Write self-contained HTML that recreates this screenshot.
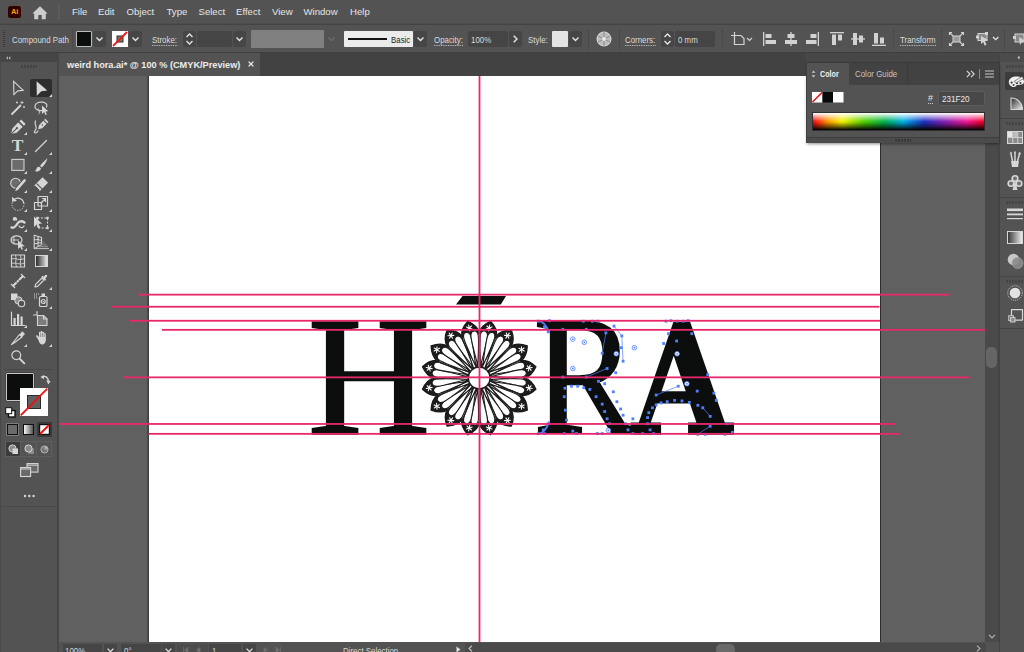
<!DOCTYPE html>
<html lang="en"><head><meta charset="utf-8"><title>weird hora.ai</title><style>
*{box-sizing:border-box;margin:0;padding:0}
html,body{width:1024px;height:652px;overflow:hidden;background:#535353}
body{position:relative;font-family:"Liberation Sans",sans-serif;font-size:9px;color:#dcdcdc;-webkit-font-smoothing:antialiased}
.abs{position:absolute}
.t{position:absolute;white-space:pre;line-height:12px;height:12px;transform-origin:0 50%;transform:scaleX(.875)}
.m{position:absolute;white-space:pre;font-size:9.6px;line-height:14px;top:5.3px;color:#e6e6e6}
.ul{border-bottom:1px dotted #cfcfcf}
.dd{position:absolute;background:#464646;border-radius:2px}
.fld{position:absolute;background:#454545;border-radius:2px}
.sep{position:absolute;width:1px;background:#444}
svg{position:absolute;overflow:visible}
</style></head><body>
<div class="abs" style="left:0;top:0;width:1024px;height:24px;background:#535353"></div>
<div class="abs" style="left:0;top:23px;width:1024px;height:1px;background:#4e4e4e"></div><div class="abs" style="left:0;top:24px;width:1024px;height:1px;background:#444"></div>
<div class="abs" style="left:8px;top:6px;width:13px;height:12px;background:#330000;border-radius:2.5px;"></div>
<div class="abs" style="left:8px;top:6px;width:13px;height:12px;line-height:12px;font-size:7.5px;font-weight:bold;color:#ff9a00;text-align:center;letter-spacing:-.2px">Ai</div>
<svg style="left:32px;top:6px" width="16" height="14" viewBox="0 0 16 14"><path d="M8 0.3 L0.4 7.5 H2.2 V13.2 H6.3 V9 H9.7 V13.2 H13.8 V7.5 H15.6 Z" fill="#cdcdcd"/></svg>
<div class="sep" style="left:58px;top:4px;height:16px;width:2px;background:#5b5b5b"></div>
<div class="m" style="left:72px">File</div>
<div class="m" style="left:98px">Edit</div>
<div class="m" style="left:126.5px">Object</div>
<div class="m" style="left:166.5px">Type</div>
<div class="m" style="left:198.5px">Select</div>
<div class="m" style="left:236px">Effect</div>
<div class="m" style="left:272px">View</div>
<div class="m" style="left:303.5px">Window</div>
<div class="m" style="left:350px">Help</div>
<div class="abs" style="left:0;top:25px;width:1024px;height:27px;background:#535353"></div>
<div class="abs" style="left:0;top:52px;width:1024px;height:1px;background:#3f3f3f"></div>
<div class="abs" style="left:3px;top:30px;width:2px;height:17px;border-left:1px dotted #3c3c3c;border-right:1px dotted #3c3c3c"></div>
<div class="t" style="left:12px;top:33.7px;">Compound Path</div>
<div class="sep" style="left:72px;top:28px;height:22px;background:#4a4a4a"></div>
<div class="abs" style="left:76px;top:31px;width:16px;height:16px;background:#0c0e0e;border:1px solid #bdbdbd;border-radius:1px"></div>
<div class="dd" style="left:93px;top:31px;width:13px;height:16px"></div>
<svg style="left:96px;top:37px" width="7" height="4" viewBox="0 0 7 4"><path d="M0.5 0.5 L3.5 3.5 L6.5 0.5" fill="none" stroke="#e6e6e6" stroke-width="1.4"/></svg>
<svg style="left:112px;top:31px" width="16" height="16" viewBox="0 0 16 16"><rect width="16" height="16" fill="#fff"/><rect x="5" y="5" width="6" height="6" fill="#777" stroke="#333" stroke-width="1"/><path d="M1 15 L15 1" stroke="#f01818" stroke-width="1.8"/></svg>
<div class="dd" style="left:129px;top:31px;width:13px;height:16px"></div>
<svg style="left:132px;top:37px" width="7" height="4" viewBox="0 0 7 4"><path d="M0.5 0.5 L3.5 3.5 L6.5 0.5" fill="none" stroke="#e6e6e6" stroke-width="1.4"/></svg>
<div class="t ul" style="left:152px;top:33.7px;">Stroke:</div>
<div class="dd" style="left:183px;top:31px;width:13px;height:16px"></div>
<svg style="left:186px;top:33px" width="7" height="12" viewBox="0 0 7 12"><path d="M0.5 4 L3.5 1 L6.5 4 M0.5 8 L3.5 11 L6.5 8" fill="none" stroke="#e6e6e6" stroke-width="1.3"/></svg>
<div class="fld" style="left:197px;top:31px;width:35px;height:16px"></div>
<div class="dd" style="left:233px;top:31px;width:13px;height:16px"></div>
<svg style="left:236px;top:37px" width="7" height="4" viewBox="0 0 7 4"><path d="M0.5 0.5 L3.5 3.5 L6.5 0.5" fill="none" stroke="#e6e6e6" stroke-width="1.4"/></svg>
<div class="abs" style="left:251px;top:30px;width:73px;height:18px;background:#808080;border-radius:1px"></div>
<svg style="left:328px;top:37px" width="7" height="4" viewBox="0 0 7 4"><path d="M0.5 0.5 L3.5 3.5 L6.5 0.5" fill="none" stroke="#6a6a6a" stroke-width="1.4"/></svg>
<div class="abs" style="left:344px;top:31px;width:69px;height:16px;background:#ebebeb;border-radius:1px"></div>
<div class="abs" style="left:348px;top:38px;width:39px;height:2px;background:#111"></div>
<div class="t" style="left:391px;top:33.7px;color:#222">Basic</div>
<div class="dd" style="left:414px;top:31px;width:13px;height:16px"></div>
<svg style="left:417px;top:37px" width="7" height="4" viewBox="0 0 7 4"><path d="M0.5 0.5 L3.5 3.5 L6.5 0.5" fill="none" stroke="#e6e6e6" stroke-width="1.4"/></svg>
<div class="t ul" style="left:434px;top:33.7px;">Opacity:</div>
<div class="fld" style="left:468px;top:31px;width:40px;height:16px"></div>
<div class="t" style="left:471px;top:33.7px;">100%</div>
<div class="dd" style="left:509px;top:31px;width:13px;height:16px"></div>
<svg style="left:513px;top:35px" width="5" height="8" viewBox="0 0 5 8"><path d="M0.7 0.7 L4 4 L0.7 7.3" fill="none" stroke="#e6e6e6" stroke-width="1.4"/></svg>
<div class="t" style="left:528px;top:33.7px;">Style:</div>
<div class="abs" style="left:552px;top:31px;width:16px;height:16px;background:#e4e4e4;border-radius:1px"></div>
<div class="dd" style="left:569px;top:31px;width:13px;height:16px"></div>
<svg style="left:572px;top:37px" width="7" height="4" viewBox="0 0 7 4"><path d="M0.5 0.5 L3.5 3.5 L6.5 0.5" fill="none" stroke="#e6e6e6" stroke-width="1.4"/></svg>
<div class="sep" style="left:588px;top:28px;height:22px;background:#4a4a4a"></div>
<svg style="left:596px;top:31px" width="16" height="16" viewBox="0 0 16 16"><circle cx="8" cy="8" r="7" fill="#bdbdbd" stroke="#e0e0e0" stroke-width="1"/><path d="M8 8 L8 1 M8 8 L14 5 M8 8 L14 11 M8 8 L8 15 M8 8 L2 11 M8 8 L2 5" stroke="#8a8a8a" stroke-width="1"/><circle cx="8" cy="8" r="2" fill="#e8e8e8"/></svg>
<div class="sep" style="left:619px;top:28px;height:22px;background:#4a4a4a"></div>
<div class="t ul" style="left:625px;top:33.7px;">Corners:</div>
<div class="dd" style="left:661px;top:31px;width:13px;height:16px"></div>
<svg style="left:664px;top:33px" width="7" height="12" viewBox="0 0 7 12"><path d="M0.5 4 L3.5 1 L6.5 4 M0.5 8 L3.5 11 L6.5 8" fill="none" stroke="#e6e6e6" stroke-width="1.3"/></svg>
<div class="fld" style="left:675px;top:31px;width:40px;height:16px"></div>
<div class="t" style="left:678px;top:33.7px;">0 mm</div>
<div class="sep" style="left:722px;top:28px;height:22px;background:#4a4a4a"></div>
<svg style="left:731px;top:32px" width="22" height="15" viewBox="0 0 22 15"><path d="M3.5 0 V12.5 H13 V6.5 L10 3.5 H0" fill="none" stroke="#d2d2d2" stroke-width="1.2"/><path d="M16 6 L18.5 8.5 L21 6" fill="none" stroke="#d2d2d2" stroke-width="1.2"/></svg>
<svg style="left:763px;top:32px" width="14" height="14" viewBox="0 0 14 14"><rect x="0" y="0" width="1.3" height="14" fill="#d2d2d2"/><rect x="2.5" y="2" width="6" height="4" fill="#d2d2d2"/><rect x="2.5" y="8" width="10.5" height="4" fill="#d2d2d2"/></svg>
<svg style="left:784px;top:32px" width="14" height="14" viewBox="0 0 14 14"><rect x="6.3" y="0" width="1.3" height="14" fill="#d2d2d2"/><rect x="3.5" y="2" width="7" height="4" fill="#d2d2d2"/><rect x="1" y="8" width="12" height="4" fill="#d2d2d2"/></svg>
<svg style="left:805px;top:32px" width="14" height="14" viewBox="0 0 14 14"><rect x="12.7" y="0" width="1.3" height="14" fill="#d2d2d2"/><rect x="5.5" y="2" width="6" height="4" fill="#d2d2d2"/><rect x="1" y="8" width="10.5" height="4" fill="#d2d2d2"/></svg>
<svg style="left:830px;top:32px" width="14" height="14" viewBox="0 0 14 14"><rect x="0" y="0" width="14" height="1.3" fill="#d2d2d2"/><rect x="2" y="2.5" width="4" height="10.5" fill="#d2d2d2"/><rect x="8" y="2.5" width="4" height="6" fill="#d2d2d2"/></svg>
<svg style="left:851px;top:32px" width="14" height="14" viewBox="0 0 14 14"><rect x="0" y="6.3" width="14" height="1.3" fill="#d2d2d2"/><rect x="2" y="1" width="4" height="12" fill="#d2d2d2"/><rect x="8" y="3.5" width="4" height="7" fill="#d2d2d2"/></svg>
<svg style="left:872px;top:32px" width="14" height="14" viewBox="0 0 14 14"><rect x="0" y="12.7" width="14" height="1.3" fill="#d2d2d2"/><rect x="2" y="1" width="4" height="10.5" fill="#d2d2d2"/><rect x="8" y="5.5" width="4" height="6" fill="#d2d2d2"/></svg>
<div class="sep" style="left:893px;top:28px;height:22px;background:#4a4a4a"></div>
<div class="t ul" style="left:900px;top:33.7px;">Transform</div>
<div class="sep" style="left:941px;top:28px;height:22px;background:#4a4a4a"></div>
<svg style="left:949px;top:32px" width="15" height="14" viewBox="0 0 15 14"><rect x="4" y="4" width="7" height="6" fill="#9a9a9a" stroke="#d2d2d2" stroke-width="1"/><path d="M0.5 3 V0.5 H3 M12 0.5 H14.5 V3 M14.5 11 V13.5 H12 M3 13.5 H0.5 V11 M1 1 L4 4 M14 1 L11 4 M14 13 L11 10 M1 13 L4 10" fill="none" stroke="#d2d2d2" stroke-width="1.1"/></svg>
<svg style="left:975px;top:32px" width="26" height="14" viewBox="0 0 26 14"><rect x="3" y="1.5" width="9" height="7" fill="#8a8a8a" stroke="#d2d2d2" stroke-width="1"/><rect x="1" y="3.5" width="3" height="3" fill="#d2d2d2"/><rect x="10" y="0" width="3" height="3" fill="#d2d2d2"/><path d="M6 4 L13 8 L10 9 L11.5 13 L9.5 13.5 L8.3 10 L6 12 Z" fill="#d2d2d2"/><path d="M18 5 L20.7 7.7 L23.4 5" fill="none" stroke="#e6e6e6" stroke-width="1.3"/></svg>
<div class="sep" style="left:1004px;top:28px;height:22px;background:#4a4a4a"></div>
<svg style="left:1012px;top:32px" width="12" height="14" viewBox="0 0 12 14"><rect x="3" y="2" width="9" height="8" fill="#8a8a8a" stroke="#d2d2d2" stroke-width="1"/><rect x="1" y="4" width="3" height="3" fill="#d2d2d2"/><path d="M7 5 L13 9 L10 10 L8 13 Z" fill="#d2d2d2"/></svg>
<div class="abs" style="left:59px;top:53px;width:965px;height:23px;background:#424242"></div>
<div class="abs" style="left:59px;top:53px;width:201px;height:23px;background:#535353"></div>
<div class="abs" style="left:67px;top:58.8px;white-space:pre;font-size:9.2px;font-weight:bold;line-height:12px;color:#ececec">weird hora.ai* @ 100 % (CMYK/Preview)</div>
<svg style="left:248.3px;top:60.6px" width="6" height="6" viewBox="0 0 6 6"><path d="M0.6 0.6 L5.4 5.4 M5.4 0.6 L0.6 5.4" stroke="#f0f0f0" stroke-width="1.3"/></svg>
<div class="abs" style="left:59px;top:76px;width:927px;height:566px;background:#606060"></div>
<div class="abs" style="left:149px;top:76px;width:731px;height:566px;background:#fff"></div>
<div class="abs" style="left:880px;top:76px;width:1px;height:566px;background:#2e2e2e"></div>
<div class="abs" style="left:147px;top:76px;width:2px;height:566px;background:linear-gradient(90deg,#505050,#3a3a3a)"></div>
<svg style="left:0;top:0" width="1024" height="652" viewBox="0 0 1024 652">
<defs><clipPath id="cv"><rect x="59" y="76" width="927" height="566"/></clipPath></defs>
<g clip-path="url(#cv)">
<text x="0" y="0" transform="translate(308.02,432.60) scale(0.9772,0.9778)" font-family="'Liberation Serif',serif" font-weight="bold" font-size="173" fill="#0c0e0e" stroke="#0c0e0e" stroke-width="2.4" stroke-linejoin="miter" style="font-weight:normal">H</text>
<text x="0" y="0" transform="translate(533.73,433.00) scale(0.8887,0.9743)" font-family="'Liberation Serif',serif" font-weight="bold" font-size="173" fill="#0c0e0e" stroke="#0c0e0e" stroke-width="2.8" stroke-linejoin="miter" style="font-weight:normal">R</text>
<text x="0" y="0" transform="translate(633.26,432.60) scale(0.8145,0.9717)" font-family="'DejaVu Serif',serif" font-weight="bold" font-size="155" fill="#0c0e0e" stroke="#0c0e0e" stroke-width="3.6" stroke-linejoin="miter">A</text>
<polygon points="462.5,296 506,296 500.8,304.6 456,304.6" fill="#0c0e0e"/>
<g transform="translate(479.2,378.0)" stroke-linejoin="round">
<defs><clipPath id="capclip"><rect x="-14" y="-60" width="28" height="17"/></clipPath></defs>
<g transform="rotate(11.25)">
<path d="M0 -11 C -2.2 -20 -9.2 -35 -8.9 -44.5 C -8.5 -51 -3.6 -55.2 0 -57.8 C 3.6 -55.2 8.5 -51 8.9 -44.5 C 9.2 -35 2.2 -20 0 -11 Z" fill="#fff" stroke="#1c1c1c" stroke-width="1.35"/>
<path d="M0 -11 C -2.2 -20 -9.2 -35 -8.9 -44.5 C -8.5 -51 -3.6 -55.2 0 -57.8 C 3.6 -55.2 8.5 -51 8.9 -44.5 C 9.2 -35 2.2 -20 0 -11 Z" fill="#1c1c1c" clip-path="url(#capclip)"/>
<path transform="rotate(-5.0)" d="M0 -12 C -1.3 -22 -3.9 -36 -3.7 -42.5 C -3.5 -46 -1.8 -47.4 0 -47.4 C 1.8 -47.4 3.5 -46 3.7 -42.5 C 3.9 -36 1.3 -22 0 -12 Z" fill="#fff" stroke="#1c1c1c" stroke-width="1.15"/>
<path transform="rotate(5.0)" d="M0 -12 C -1.3 -22 -3.9 -36 -3.7 -42.5 C -3.5 -46 -1.8 -47.4 0 -47.4 C 1.8 -47.4 3.5 -46 3.7 -42.5 C 3.9 -36 1.3 -22 0 -12 Z" fill="#fff" stroke="#1c1c1c" stroke-width="1.15"/>
<g transform="translate(0,-51)" stroke="#fff" stroke-width="1.05" stroke-linecap="round">
<path d="M-0.00 -3.00 L0.00 3.00"/>
<path d="M-2.60 -1.50 L2.60 1.50"/>
<path d="M-2.60 1.50 L2.60 -1.50"/>
</g>
</g>
<g transform="rotate(33.75)">
<path d="M0 -11 C -2.2 -20 -9.2 -35 -8.9 -44.5 C -8.5 -51 -3.6 -55.2 0 -57.8 C 3.6 -55.2 8.5 -51 8.9 -44.5 C 9.2 -35 2.2 -20 0 -11 Z" fill="#fff" stroke="#1c1c1c" stroke-width="1.35"/>
<path d="M0 -11 C -2.2 -20 -9.2 -35 -8.9 -44.5 C -8.5 -51 -3.6 -55.2 0 -57.8 C 3.6 -55.2 8.5 -51 8.9 -44.5 C 9.2 -35 2.2 -20 0 -11 Z" fill="#1c1c1c" clip-path="url(#capclip)"/>
<path transform="rotate(-5.0)" d="M0 -12 C -1.3 -22 -3.9 -36 -3.7 -42.5 C -3.5 -46 -1.8 -47.4 0 -47.4 C 1.8 -47.4 3.5 -46 3.7 -42.5 C 3.9 -36 1.3 -22 0 -12 Z" fill="#fff" stroke="#1c1c1c" stroke-width="1.15"/>
<path transform="rotate(5.0)" d="M0 -12 C -1.3 -22 -3.9 -36 -3.7 -42.5 C -3.5 -46 -1.8 -47.4 0 -47.4 C 1.8 -47.4 3.5 -46 3.7 -42.5 C 3.9 -36 1.3 -22 0 -12 Z" fill="#fff" stroke="#1c1c1c" stroke-width="1.15"/>
<g transform="translate(0,-51)" stroke="#fff" stroke-width="1.05" stroke-linecap="round">
<path d="M-0.00 -3.00 L0.00 3.00"/>
<path d="M-2.60 -1.50 L2.60 1.50"/>
<path d="M-2.60 1.50 L2.60 -1.50"/>
</g>
</g>
<g transform="rotate(56.25)">
<path d="M0 -11 C -2.2 -20 -9.2 -35 -8.9 -44.5 C -8.5 -51 -3.6 -55.2 0 -57.8 C 3.6 -55.2 8.5 -51 8.9 -44.5 C 9.2 -35 2.2 -20 0 -11 Z" fill="#fff" stroke="#1c1c1c" stroke-width="1.35"/>
<path d="M0 -11 C -2.2 -20 -9.2 -35 -8.9 -44.5 C -8.5 -51 -3.6 -55.2 0 -57.8 C 3.6 -55.2 8.5 -51 8.9 -44.5 C 9.2 -35 2.2 -20 0 -11 Z" fill="#1c1c1c" clip-path="url(#capclip)"/>
<path transform="rotate(-5.0)" d="M0 -12 C -1.3 -22 -3.9 -36 -3.7 -42.5 C -3.5 -46 -1.8 -47.4 0 -47.4 C 1.8 -47.4 3.5 -46 3.7 -42.5 C 3.9 -36 1.3 -22 0 -12 Z" fill="#fff" stroke="#1c1c1c" stroke-width="1.15"/>
<path transform="rotate(5.0)" d="M0 -12 C -1.3 -22 -3.9 -36 -3.7 -42.5 C -3.5 -46 -1.8 -47.4 0 -47.4 C 1.8 -47.4 3.5 -46 3.7 -42.5 C 3.9 -36 1.3 -22 0 -12 Z" fill="#fff" stroke="#1c1c1c" stroke-width="1.15"/>
<g transform="translate(0,-51)" stroke="#fff" stroke-width="1.05" stroke-linecap="round">
<path d="M-0.00 -3.00 L0.00 3.00"/>
<path d="M-2.60 -1.50 L2.60 1.50"/>
<path d="M-2.60 1.50 L2.60 -1.50"/>
</g>
</g>
<g transform="rotate(78.75)">
<path d="M0 -11 C -2.2 -20 -9.2 -35 -8.9 -44.5 C -8.5 -51 -3.6 -55.2 0 -57.8 C 3.6 -55.2 8.5 -51 8.9 -44.5 C 9.2 -35 2.2 -20 0 -11 Z" fill="#fff" stroke="#1c1c1c" stroke-width="1.35"/>
<path d="M0 -11 C -2.2 -20 -9.2 -35 -8.9 -44.5 C -8.5 -51 -3.6 -55.2 0 -57.8 C 3.6 -55.2 8.5 -51 8.9 -44.5 C 9.2 -35 2.2 -20 0 -11 Z" fill="#1c1c1c" clip-path="url(#capclip)"/>
<path transform="rotate(-5.0)" d="M0 -12 C -1.3 -22 -3.9 -36 -3.7 -42.5 C -3.5 -46 -1.8 -47.4 0 -47.4 C 1.8 -47.4 3.5 -46 3.7 -42.5 C 3.9 -36 1.3 -22 0 -12 Z" fill="#fff" stroke="#1c1c1c" stroke-width="1.15"/>
<path transform="rotate(5.0)" d="M0 -12 C -1.3 -22 -3.9 -36 -3.7 -42.5 C -3.5 -46 -1.8 -47.4 0 -47.4 C 1.8 -47.4 3.5 -46 3.7 -42.5 C 3.9 -36 1.3 -22 0 -12 Z" fill="#fff" stroke="#1c1c1c" stroke-width="1.15"/>
<g transform="translate(0,-51)" stroke="#fff" stroke-width="1.05" stroke-linecap="round">
<path d="M-0.00 -3.00 L0.00 3.00"/>
<path d="M-2.60 -1.50 L2.60 1.50"/>
<path d="M-2.60 1.50 L2.60 -1.50"/>
</g>
</g>
<g transform="rotate(101.25)">
<path d="M0 -11 C -2.2 -20 -9.2 -35 -8.9 -44.5 C -8.5 -51 -3.6 -55.2 0 -57.8 C 3.6 -55.2 8.5 -51 8.9 -44.5 C 9.2 -35 2.2 -20 0 -11 Z" fill="#fff" stroke="#1c1c1c" stroke-width="1.35"/>
<path d="M0 -11 C -2.2 -20 -9.2 -35 -8.9 -44.5 C -8.5 -51 -3.6 -55.2 0 -57.8 C 3.6 -55.2 8.5 -51 8.9 -44.5 C 9.2 -35 2.2 -20 0 -11 Z" fill="#1c1c1c" clip-path="url(#capclip)"/>
<path transform="rotate(-5.0)" d="M0 -12 C -1.3 -22 -3.9 -36 -3.7 -42.5 C -3.5 -46 -1.8 -47.4 0 -47.4 C 1.8 -47.4 3.5 -46 3.7 -42.5 C 3.9 -36 1.3 -22 0 -12 Z" fill="#fff" stroke="#1c1c1c" stroke-width="1.15"/>
<path transform="rotate(5.0)" d="M0 -12 C -1.3 -22 -3.9 -36 -3.7 -42.5 C -3.5 -46 -1.8 -47.4 0 -47.4 C 1.8 -47.4 3.5 -46 3.7 -42.5 C 3.9 -36 1.3 -22 0 -12 Z" fill="#fff" stroke="#1c1c1c" stroke-width="1.15"/>
<g transform="translate(0,-51)" stroke="#fff" stroke-width="1.05" stroke-linecap="round">
<path d="M-0.00 -3.00 L0.00 3.00"/>
<path d="M-2.60 -1.50 L2.60 1.50"/>
<path d="M-2.60 1.50 L2.60 -1.50"/>
</g>
</g>
<g transform="rotate(123.75)">
<path d="M0 -11 C -2.2 -20 -9.2 -35 -8.9 -44.5 C -8.5 -51 -3.6 -55.2 0 -57.8 C 3.6 -55.2 8.5 -51 8.9 -44.5 C 9.2 -35 2.2 -20 0 -11 Z" fill="#fff" stroke="#1c1c1c" stroke-width="1.35"/>
<path d="M0 -11 C -2.2 -20 -9.2 -35 -8.9 -44.5 C -8.5 -51 -3.6 -55.2 0 -57.8 C 3.6 -55.2 8.5 -51 8.9 -44.5 C 9.2 -35 2.2 -20 0 -11 Z" fill="#1c1c1c" clip-path="url(#capclip)"/>
<path transform="rotate(-5.0)" d="M0 -12 C -1.3 -22 -3.9 -36 -3.7 -42.5 C -3.5 -46 -1.8 -47.4 0 -47.4 C 1.8 -47.4 3.5 -46 3.7 -42.5 C 3.9 -36 1.3 -22 0 -12 Z" fill="#fff" stroke="#1c1c1c" stroke-width="1.15"/>
<path transform="rotate(5.0)" d="M0 -12 C -1.3 -22 -3.9 -36 -3.7 -42.5 C -3.5 -46 -1.8 -47.4 0 -47.4 C 1.8 -47.4 3.5 -46 3.7 -42.5 C 3.9 -36 1.3 -22 0 -12 Z" fill="#fff" stroke="#1c1c1c" stroke-width="1.15"/>
<g transform="translate(0,-51)" stroke="#fff" stroke-width="1.05" stroke-linecap="round">
<path d="M-0.00 -3.00 L0.00 3.00"/>
<path d="M-2.60 -1.50 L2.60 1.50"/>
<path d="M-2.60 1.50 L2.60 -1.50"/>
</g>
</g>
<g transform="rotate(146.25)">
<path d="M0 -11 C -2.2 -20 -9.2 -35 -8.9 -44.5 C -8.5 -51 -3.6 -55.2 0 -57.8 C 3.6 -55.2 8.5 -51 8.9 -44.5 C 9.2 -35 2.2 -20 0 -11 Z" fill="#fff" stroke="#1c1c1c" stroke-width="1.35"/>
<path d="M0 -11 C -2.2 -20 -9.2 -35 -8.9 -44.5 C -8.5 -51 -3.6 -55.2 0 -57.8 C 3.6 -55.2 8.5 -51 8.9 -44.5 C 9.2 -35 2.2 -20 0 -11 Z" fill="#1c1c1c" clip-path="url(#capclip)"/>
<path transform="rotate(-5.0)" d="M0 -12 C -1.3 -22 -3.9 -36 -3.7 -42.5 C -3.5 -46 -1.8 -47.4 0 -47.4 C 1.8 -47.4 3.5 -46 3.7 -42.5 C 3.9 -36 1.3 -22 0 -12 Z" fill="#fff" stroke="#1c1c1c" stroke-width="1.15"/>
<path transform="rotate(5.0)" d="M0 -12 C -1.3 -22 -3.9 -36 -3.7 -42.5 C -3.5 -46 -1.8 -47.4 0 -47.4 C 1.8 -47.4 3.5 -46 3.7 -42.5 C 3.9 -36 1.3 -22 0 -12 Z" fill="#fff" stroke="#1c1c1c" stroke-width="1.15"/>
<g transform="translate(0,-51)" stroke="#fff" stroke-width="1.05" stroke-linecap="round">
<path d="M-0.00 -3.00 L0.00 3.00"/>
<path d="M-2.60 -1.50 L2.60 1.50"/>
<path d="M-2.60 1.50 L2.60 -1.50"/>
</g>
</g>
<g transform="rotate(168.75)">
<path d="M0 -11 C -2.2 -20 -9.2 -35 -8.9 -44.5 C -8.5 -51 -3.6 -55.2 0 -57.8 C 3.6 -55.2 8.5 -51 8.9 -44.5 C 9.2 -35 2.2 -20 0 -11 Z" fill="#fff" stroke="#1c1c1c" stroke-width="1.35"/>
<path d="M0 -11 C -2.2 -20 -9.2 -35 -8.9 -44.5 C -8.5 -51 -3.6 -55.2 0 -57.8 C 3.6 -55.2 8.5 -51 8.9 -44.5 C 9.2 -35 2.2 -20 0 -11 Z" fill="#1c1c1c" clip-path="url(#capclip)"/>
<path transform="rotate(-5.0)" d="M0 -12 C -1.3 -22 -3.9 -36 -3.7 -42.5 C -3.5 -46 -1.8 -47.4 0 -47.4 C 1.8 -47.4 3.5 -46 3.7 -42.5 C 3.9 -36 1.3 -22 0 -12 Z" fill="#fff" stroke="#1c1c1c" stroke-width="1.15"/>
<path transform="rotate(5.0)" d="M0 -12 C -1.3 -22 -3.9 -36 -3.7 -42.5 C -3.5 -46 -1.8 -47.4 0 -47.4 C 1.8 -47.4 3.5 -46 3.7 -42.5 C 3.9 -36 1.3 -22 0 -12 Z" fill="#fff" stroke="#1c1c1c" stroke-width="1.15"/>
<g transform="translate(0,-51)" stroke="#fff" stroke-width="1.05" stroke-linecap="round">
<path d="M-0.00 -3.00 L0.00 3.00"/>
<path d="M-2.60 -1.50 L2.60 1.50"/>
<path d="M-2.60 1.50 L2.60 -1.50"/>
</g>
</g>
<g transform="rotate(191.25)">
<path d="M0 -11 C -2.2 -20 -9.2 -35 -8.9 -44.5 C -8.5 -51 -3.6 -55.2 0 -57.8 C 3.6 -55.2 8.5 -51 8.9 -44.5 C 9.2 -35 2.2 -20 0 -11 Z" fill="#fff" stroke="#1c1c1c" stroke-width="1.35"/>
<path d="M0 -11 C -2.2 -20 -9.2 -35 -8.9 -44.5 C -8.5 -51 -3.6 -55.2 0 -57.8 C 3.6 -55.2 8.5 -51 8.9 -44.5 C 9.2 -35 2.2 -20 0 -11 Z" fill="#1c1c1c" clip-path="url(#capclip)"/>
<path transform="rotate(-5.0)" d="M0 -12 C -1.3 -22 -3.9 -36 -3.7 -42.5 C -3.5 -46 -1.8 -47.4 0 -47.4 C 1.8 -47.4 3.5 -46 3.7 -42.5 C 3.9 -36 1.3 -22 0 -12 Z" fill="#fff" stroke="#1c1c1c" stroke-width="1.15"/>
<path transform="rotate(5.0)" d="M0 -12 C -1.3 -22 -3.9 -36 -3.7 -42.5 C -3.5 -46 -1.8 -47.4 0 -47.4 C 1.8 -47.4 3.5 -46 3.7 -42.5 C 3.9 -36 1.3 -22 0 -12 Z" fill="#fff" stroke="#1c1c1c" stroke-width="1.15"/>
<g transform="translate(0,-51)" stroke="#fff" stroke-width="1.05" stroke-linecap="round">
<path d="M-0.00 -3.00 L0.00 3.00"/>
<path d="M-2.60 -1.50 L2.60 1.50"/>
<path d="M-2.60 1.50 L2.60 -1.50"/>
</g>
</g>
<g transform="rotate(213.75)">
<path d="M0 -11 C -2.2 -20 -9.2 -35 -8.9 -44.5 C -8.5 -51 -3.6 -55.2 0 -57.8 C 3.6 -55.2 8.5 -51 8.9 -44.5 C 9.2 -35 2.2 -20 0 -11 Z" fill="#fff" stroke="#1c1c1c" stroke-width="1.35"/>
<path d="M0 -11 C -2.2 -20 -9.2 -35 -8.9 -44.5 C -8.5 -51 -3.6 -55.2 0 -57.8 C 3.6 -55.2 8.5 -51 8.9 -44.5 C 9.2 -35 2.2 -20 0 -11 Z" fill="#1c1c1c" clip-path="url(#capclip)"/>
<path transform="rotate(-5.0)" d="M0 -12 C -1.3 -22 -3.9 -36 -3.7 -42.5 C -3.5 -46 -1.8 -47.4 0 -47.4 C 1.8 -47.4 3.5 -46 3.7 -42.5 C 3.9 -36 1.3 -22 0 -12 Z" fill="#fff" stroke="#1c1c1c" stroke-width="1.15"/>
<path transform="rotate(5.0)" d="M0 -12 C -1.3 -22 -3.9 -36 -3.7 -42.5 C -3.5 -46 -1.8 -47.4 0 -47.4 C 1.8 -47.4 3.5 -46 3.7 -42.5 C 3.9 -36 1.3 -22 0 -12 Z" fill="#fff" stroke="#1c1c1c" stroke-width="1.15"/>
<g transform="translate(0,-51)" stroke="#fff" stroke-width="1.05" stroke-linecap="round">
<path d="M-0.00 -3.00 L0.00 3.00"/>
<path d="M-2.60 -1.50 L2.60 1.50"/>
<path d="M-2.60 1.50 L2.60 -1.50"/>
</g>
</g>
<g transform="rotate(236.25)">
<path d="M0 -11 C -2.2 -20 -9.2 -35 -8.9 -44.5 C -8.5 -51 -3.6 -55.2 0 -57.8 C 3.6 -55.2 8.5 -51 8.9 -44.5 C 9.2 -35 2.2 -20 0 -11 Z" fill="#fff" stroke="#1c1c1c" stroke-width="1.35"/>
<path d="M0 -11 C -2.2 -20 -9.2 -35 -8.9 -44.5 C -8.5 -51 -3.6 -55.2 0 -57.8 C 3.6 -55.2 8.5 -51 8.9 -44.5 C 9.2 -35 2.2 -20 0 -11 Z" fill="#1c1c1c" clip-path="url(#capclip)"/>
<path transform="rotate(-5.0)" d="M0 -12 C -1.3 -22 -3.9 -36 -3.7 -42.5 C -3.5 -46 -1.8 -47.4 0 -47.4 C 1.8 -47.4 3.5 -46 3.7 -42.5 C 3.9 -36 1.3 -22 0 -12 Z" fill="#fff" stroke="#1c1c1c" stroke-width="1.15"/>
<path transform="rotate(5.0)" d="M0 -12 C -1.3 -22 -3.9 -36 -3.7 -42.5 C -3.5 -46 -1.8 -47.4 0 -47.4 C 1.8 -47.4 3.5 -46 3.7 -42.5 C 3.9 -36 1.3 -22 0 -12 Z" fill="#fff" stroke="#1c1c1c" stroke-width="1.15"/>
<g transform="translate(0,-51)" stroke="#fff" stroke-width="1.05" stroke-linecap="round">
<path d="M-0.00 -3.00 L0.00 3.00"/>
<path d="M-2.60 -1.50 L2.60 1.50"/>
<path d="M-2.60 1.50 L2.60 -1.50"/>
</g>
</g>
<g transform="rotate(258.75)">
<path d="M0 -11 C -2.2 -20 -9.2 -35 -8.9 -44.5 C -8.5 -51 -3.6 -55.2 0 -57.8 C 3.6 -55.2 8.5 -51 8.9 -44.5 C 9.2 -35 2.2 -20 0 -11 Z" fill="#fff" stroke="#1c1c1c" stroke-width="1.35"/>
<path d="M0 -11 C -2.2 -20 -9.2 -35 -8.9 -44.5 C -8.5 -51 -3.6 -55.2 0 -57.8 C 3.6 -55.2 8.5 -51 8.9 -44.5 C 9.2 -35 2.2 -20 0 -11 Z" fill="#1c1c1c" clip-path="url(#capclip)"/>
<path transform="rotate(-5.0)" d="M0 -12 C -1.3 -22 -3.9 -36 -3.7 -42.5 C -3.5 -46 -1.8 -47.4 0 -47.4 C 1.8 -47.4 3.5 -46 3.7 -42.5 C 3.9 -36 1.3 -22 0 -12 Z" fill="#fff" stroke="#1c1c1c" stroke-width="1.15"/>
<path transform="rotate(5.0)" d="M0 -12 C -1.3 -22 -3.9 -36 -3.7 -42.5 C -3.5 -46 -1.8 -47.4 0 -47.4 C 1.8 -47.4 3.5 -46 3.7 -42.5 C 3.9 -36 1.3 -22 0 -12 Z" fill="#fff" stroke="#1c1c1c" stroke-width="1.15"/>
<g transform="translate(0,-51)" stroke="#fff" stroke-width="1.05" stroke-linecap="round">
<path d="M-0.00 -3.00 L0.00 3.00"/>
<path d="M-2.60 -1.50 L2.60 1.50"/>
<path d="M-2.60 1.50 L2.60 -1.50"/>
</g>
</g>
<g transform="rotate(281.25)">
<path d="M0 -11 C -2.2 -20 -9.2 -35 -8.9 -44.5 C -8.5 -51 -3.6 -55.2 0 -57.8 C 3.6 -55.2 8.5 -51 8.9 -44.5 C 9.2 -35 2.2 -20 0 -11 Z" fill="#fff" stroke="#1c1c1c" stroke-width="1.35"/>
<path d="M0 -11 C -2.2 -20 -9.2 -35 -8.9 -44.5 C -8.5 -51 -3.6 -55.2 0 -57.8 C 3.6 -55.2 8.5 -51 8.9 -44.5 C 9.2 -35 2.2 -20 0 -11 Z" fill="#1c1c1c" clip-path="url(#capclip)"/>
<path transform="rotate(-5.0)" d="M0 -12 C -1.3 -22 -3.9 -36 -3.7 -42.5 C -3.5 -46 -1.8 -47.4 0 -47.4 C 1.8 -47.4 3.5 -46 3.7 -42.5 C 3.9 -36 1.3 -22 0 -12 Z" fill="#fff" stroke="#1c1c1c" stroke-width="1.15"/>
<path transform="rotate(5.0)" d="M0 -12 C -1.3 -22 -3.9 -36 -3.7 -42.5 C -3.5 -46 -1.8 -47.4 0 -47.4 C 1.8 -47.4 3.5 -46 3.7 -42.5 C 3.9 -36 1.3 -22 0 -12 Z" fill="#fff" stroke="#1c1c1c" stroke-width="1.15"/>
<g transform="translate(0,-51)" stroke="#fff" stroke-width="1.05" stroke-linecap="round">
<path d="M-0.00 -3.00 L0.00 3.00"/>
<path d="M-2.60 -1.50 L2.60 1.50"/>
<path d="M-2.60 1.50 L2.60 -1.50"/>
</g>
</g>
<g transform="rotate(303.75)">
<path d="M0 -11 C -2.2 -20 -9.2 -35 -8.9 -44.5 C -8.5 -51 -3.6 -55.2 0 -57.8 C 3.6 -55.2 8.5 -51 8.9 -44.5 C 9.2 -35 2.2 -20 0 -11 Z" fill="#fff" stroke="#1c1c1c" stroke-width="1.35"/>
<path d="M0 -11 C -2.2 -20 -9.2 -35 -8.9 -44.5 C -8.5 -51 -3.6 -55.2 0 -57.8 C 3.6 -55.2 8.5 -51 8.9 -44.5 C 9.2 -35 2.2 -20 0 -11 Z" fill="#1c1c1c" clip-path="url(#capclip)"/>
<path transform="rotate(-5.0)" d="M0 -12 C -1.3 -22 -3.9 -36 -3.7 -42.5 C -3.5 -46 -1.8 -47.4 0 -47.4 C 1.8 -47.4 3.5 -46 3.7 -42.5 C 3.9 -36 1.3 -22 0 -12 Z" fill="#fff" stroke="#1c1c1c" stroke-width="1.15"/>
<path transform="rotate(5.0)" d="M0 -12 C -1.3 -22 -3.9 -36 -3.7 -42.5 C -3.5 -46 -1.8 -47.4 0 -47.4 C 1.8 -47.4 3.5 -46 3.7 -42.5 C 3.9 -36 1.3 -22 0 -12 Z" fill="#fff" stroke="#1c1c1c" stroke-width="1.15"/>
<g transform="translate(0,-51)" stroke="#fff" stroke-width="1.05" stroke-linecap="round">
<path d="M-0.00 -3.00 L0.00 3.00"/>
<path d="M-2.60 -1.50 L2.60 1.50"/>
<path d="M-2.60 1.50 L2.60 -1.50"/>
</g>
</g>
<g transform="rotate(326.25)">
<path d="M0 -11 C -2.2 -20 -9.2 -35 -8.9 -44.5 C -8.5 -51 -3.6 -55.2 0 -57.8 C 3.6 -55.2 8.5 -51 8.9 -44.5 C 9.2 -35 2.2 -20 0 -11 Z" fill="#fff" stroke="#1c1c1c" stroke-width="1.35"/>
<path d="M0 -11 C -2.2 -20 -9.2 -35 -8.9 -44.5 C -8.5 -51 -3.6 -55.2 0 -57.8 C 3.6 -55.2 8.5 -51 8.9 -44.5 C 9.2 -35 2.2 -20 0 -11 Z" fill="#1c1c1c" clip-path="url(#capclip)"/>
<path transform="rotate(-5.0)" d="M0 -12 C -1.3 -22 -3.9 -36 -3.7 -42.5 C -3.5 -46 -1.8 -47.4 0 -47.4 C 1.8 -47.4 3.5 -46 3.7 -42.5 C 3.9 -36 1.3 -22 0 -12 Z" fill="#fff" stroke="#1c1c1c" stroke-width="1.15"/>
<path transform="rotate(5.0)" d="M0 -12 C -1.3 -22 -3.9 -36 -3.7 -42.5 C -3.5 -46 -1.8 -47.4 0 -47.4 C 1.8 -47.4 3.5 -46 3.7 -42.5 C 3.9 -36 1.3 -22 0 -12 Z" fill="#fff" stroke="#1c1c1c" stroke-width="1.15"/>
<g transform="translate(0,-51)" stroke="#fff" stroke-width="1.05" stroke-linecap="round">
<path d="M-0.00 -3.00 L0.00 3.00"/>
<path d="M-2.60 -1.50 L2.60 1.50"/>
<path d="M-2.60 1.50 L2.60 -1.50"/>
</g>
</g>
<g transform="rotate(348.75)">
<path d="M0 -11 C -2.2 -20 -9.2 -35 -8.9 -44.5 C -8.5 -51 -3.6 -55.2 0 -57.8 C 3.6 -55.2 8.5 -51 8.9 -44.5 C 9.2 -35 2.2 -20 0 -11 Z" fill="#fff" stroke="#1c1c1c" stroke-width="1.35"/>
<path d="M0 -11 C -2.2 -20 -9.2 -35 -8.9 -44.5 C -8.5 -51 -3.6 -55.2 0 -57.8 C 3.6 -55.2 8.5 -51 8.9 -44.5 C 9.2 -35 2.2 -20 0 -11 Z" fill="#1c1c1c" clip-path="url(#capclip)"/>
<path transform="rotate(-5.0)" d="M0 -12 C -1.3 -22 -3.9 -36 -3.7 -42.5 C -3.5 -46 -1.8 -47.4 0 -47.4 C 1.8 -47.4 3.5 -46 3.7 -42.5 C 3.9 -36 1.3 -22 0 -12 Z" fill="#fff" stroke="#1c1c1c" stroke-width="1.15"/>
<path transform="rotate(5.0)" d="M0 -12 C -1.3 -22 -3.9 -36 -3.7 -42.5 C -3.5 -46 -1.8 -47.4 0 -47.4 C 1.8 -47.4 3.5 -46 3.7 -42.5 C 3.9 -36 1.3 -22 0 -12 Z" fill="#fff" stroke="#1c1c1c" stroke-width="1.15"/>
<g transform="translate(0,-51)" stroke="#fff" stroke-width="1.05" stroke-linecap="round">
<path d="M-0.00 -3.00 L0.00 3.00"/>
<path d="M-2.60 -1.50 L2.60 1.50"/>
<path d="M-2.60 1.50 L2.60 -1.50"/>
</g>
</g>
<circle r="11" fill="#fff" stroke="#1c1c1c" stroke-width="1.6"/>
</g>
<path d="M537.2 320.6 C 542 321 546.5 324 549 332.5" fill="none" stroke="#4f80ff" stroke-width="1.8" stroke-linecap="round"/>
<path d="M549 422 C 546.5 430.5 542 433.6 537.2 434.3" fill="none" stroke="#4f80ff" stroke-width="1.8" stroke-linecap="round"/>
<path d="M605.9 332.9 L602.2 353.3" stroke="#4f80ff" stroke-width="0.7"/>
<path d="M621.8 335.9 L623.1 361.2" stroke="#4f80ff" stroke-width="0.7"/>
<path d="M586.3 377.1 L607.1 368.5" stroke="#4f80ff" stroke-width="0.7"/>
<path d="M656.2 395.0 L678.3 386.2" stroke="#4f80ff" stroke-width="0.7"/>
<path d="M702.8 407.8 L710.2 416.4" stroke="#4f80ff" stroke-width="0.7"/>
<path d="M697.9 434.3 L710.2 426.2" stroke="#4f80ff" stroke-width="0.7"/>
<path d="M614.0 326.1 L621.8 335.9" stroke="#4f80ff" stroke-width="0.7"/>
<rect x="537.0" y="319.8" width="2.8" height="2.8" fill="#4f80ff"/>
<rect x="548.0" y="319.3" width="2.8" height="2.8" fill="#4f80ff"/>
<rect x="581.9" y="319.8" width="2.8" height="2.8" fill="#4f80ff"/>
<rect x="591.0" y="319.8" width="2.8" height="2.8" fill="#4f80ff"/>
<rect x="596.6" y="319.8" width="2.8" height="2.8" fill="#4f80ff"/>
<rect x="612.6" y="324.7" width="2.8" height="2.8" fill="#4f80ff"/>
<rect x="620.4" y="334.5" width="2.8" height="2.8" fill="#4f80ff"/>
<rect x="619.7" y="346.3" width="2.8" height="2.8" fill="#4f80ff"/>
<rect x="621.7" y="359.8" width="2.8" height="2.8" fill="#4f80ff"/>
<rect x="614.3" y="371.3" width="2.8" height="2.8" fill="#4f80ff"/>
<rect x="605.7" y="367.1" width="2.8" height="2.8" fill="#4f80ff"/>
<rect x="600.8" y="351.9" width="2.8" height="2.8" fill="#4f80ff"/>
<rect x="604.5" y="331.5" width="2.8" height="2.8" fill="#4f80ff"/>
<rect x="584.9" y="327.9" width="2.8" height="2.8" fill="#4f80ff"/>
<rect x="561.5" y="327.9" width="2.8" height="2.8" fill="#4f80ff"/>
<rect x="546.8" y="330.3" width="2.8" height="2.8" fill="#4f80ff"/>
<rect x="543.1" y="325.4" width="2.8" height="2.8" fill="#4f80ff"/>
<rect x="561.5" y="375.7" width="2.8" height="2.8" fill="#4f80ff"/>
<rect x="584.9" y="375.7" width="2.8" height="2.8" fill="#4f80ff"/>
<rect x="597.1" y="379.9" width="2.8" height="2.8" fill="#4f80ff"/>
<rect x="603.3" y="382.3" width="2.8" height="2.8" fill="#4f80ff"/>
<rect x="611.9" y="390.4" width="2.8" height="2.8" fill="#4f80ff"/>
<rect x="615.5" y="400.3" width="2.8" height="2.8" fill="#4f80ff"/>
<rect x="619.2" y="407.6" width="2.8" height="2.8" fill="#4f80ff"/>
<rect x="621.7" y="413.8" width="2.8" height="2.8" fill="#4f80ff"/>
<rect x="624.1" y="422.3" width="2.8" height="2.8" fill="#4f80ff"/>
<rect x="626.6" y="428.5" width="2.8" height="2.8" fill="#4f80ff"/>
<rect x="631.5" y="417.4" width="2.8" height="2.8" fill="#4f80ff"/>
<rect x="563.5" y="386.8" width="2.8" height="2.8" fill="#4f80ff"/>
<rect x="570.1" y="384.8" width="2.8" height="2.8" fill="#4f80ff"/>
<rect x="576.3" y="384.8" width="2.8" height="2.8" fill="#4f80ff"/>
<rect x="582.4" y="386.3" width="2.8" height="2.8" fill="#4f80ff"/>
<rect x="588.5" y="388.0" width="2.8" height="2.8" fill="#4f80ff"/>
<rect x="594.7" y="395.3" width="2.8" height="2.8" fill="#4f80ff"/>
<rect x="600.8" y="402.7" width="2.8" height="2.8" fill="#4f80ff"/>
<rect x="603.3" y="410.1" width="2.8" height="2.8" fill="#4f80ff"/>
<rect x="605.7" y="417.4" width="2.8" height="2.8" fill="#4f80ff"/>
<rect x="608.2" y="422.3" width="2.8" height="2.8" fill="#4f80ff"/>
<rect x="600.8" y="432.2" width="2.8" height="2.8" fill="#4f80ff"/>
<rect x="595.9" y="432.2" width="2.8" height="2.8" fill="#4f80ff"/>
<rect x="575.0" y="432.2" width="2.8" height="2.8" fill="#4f80ff"/>
<rect x="571.4" y="429.7" width="2.8" height="2.8" fill="#4f80ff"/>
<rect x="565.2" y="418.7" width="2.8" height="2.8" fill="#4f80ff"/>
<rect x="564.0" y="408.8" width="2.8" height="2.8" fill="#4f80ff"/>
<rect x="562.8" y="395.3" width="2.8" height="2.8" fill="#4f80ff"/>
<rect x="546.8" y="422.3" width="2.8" height="2.8" fill="#4f80ff"/>
<rect x="541.9" y="428.5" width="2.8" height="2.8" fill="#4f80ff"/>
<rect x="537.0" y="432.2" width="2.8" height="2.8" fill="#4f80ff"/>
<rect x="543.1" y="432.2" width="2.8" height="2.8" fill="#4f80ff"/>
<rect x="562.8" y="432.2" width="2.8" height="2.8" fill="#4f80ff"/>
<rect x="664.6" y="319.8" width="2.8" height="2.8" fill="#4f80ff"/>
<rect x="669.5" y="319.3" width="2.8" height="2.8" fill="#4f80ff"/>
<rect x="675.7" y="319.8" width="2.8" height="2.8" fill="#4f80ff"/>
<rect x="681.8" y="319.8" width="2.8" height="2.8" fill="#4f80ff"/>
<rect x="686.7" y="319.3" width="2.8" height="2.8" fill="#4f80ff"/>
<rect x="690.4" y="332.3" width="2.8" height="2.8" fill="#4f80ff"/>
<rect x="667.1" y="332.3" width="2.8" height="2.8" fill="#4f80ff"/>
<rect x="662.2" y="342.1" width="2.8" height="2.8" fill="#4f80ff"/>
<rect x="675.2" y="339.6" width="2.8" height="2.8" fill="#4f80ff"/>
<rect x="706.3" y="373.3" width="2.8" height="2.8" fill="#4f80ff"/>
<rect x="712.5" y="391.7" width="2.8" height="2.8" fill="#4f80ff"/>
<rect x="714.9" y="399.0" width="2.8" height="2.8" fill="#4f80ff"/>
<rect x="726.0" y="422.3" width="2.8" height="2.8" fill="#4f80ff"/>
<rect x="730.9" y="430.9" width="2.8" height="2.8" fill="#4f80ff"/>
<rect x="723.5" y="432.9" width="2.8" height="2.8" fill="#4f80ff"/>
<rect x="703.9" y="432.9" width="2.8" height="2.8" fill="#4f80ff"/>
<rect x="696.5" y="432.9" width="2.8" height="2.8" fill="#4f80ff"/>
<rect x="708.8" y="424.8" width="2.8" height="2.8" fill="#4f80ff"/>
<rect x="708.8" y="415.0" width="2.8" height="2.8" fill="#4f80ff"/>
<rect x="701.4" y="406.4" width="2.8" height="2.8" fill="#4f80ff"/>
<rect x="696.5" y="403.9" width="2.8" height="2.8" fill="#4f80ff"/>
<rect x="687.9" y="401.0" width="2.8" height="2.8" fill="#4f80ff"/>
<rect x="680.6" y="399.5" width="2.8" height="2.8" fill="#4f80ff"/>
<rect x="673.2" y="399.0" width="2.8" height="2.8" fill="#4f80ff"/>
<rect x="665.8" y="400.3" width="2.8" height="2.8" fill="#4f80ff"/>
<rect x="659.7" y="401.5" width="2.8" height="2.8" fill="#4f80ff"/>
<rect x="654.8" y="403.4" width="2.8" height="2.8" fill="#4f80ff"/>
<rect x="651.1" y="406.4" width="2.8" height="2.8" fill="#4f80ff"/>
<rect x="647.4" y="411.3" width="2.8" height="2.8" fill="#4f80ff"/>
<rect x="646.2" y="416.2" width="2.8" height="2.8" fill="#4f80ff"/>
<rect x="646.2" y="422.3" width="2.8" height="2.8" fill="#4f80ff"/>
<rect x="648.7" y="428.5" width="2.8" height="2.8" fill="#4f80ff"/>
<rect x="652.3" y="432.2" width="2.8" height="2.8" fill="#4f80ff"/>
<rect x="641.3" y="432.2" width="2.8" height="2.8" fill="#4f80ff"/>
<rect x="631.5" y="432.2" width="2.8" height="2.8" fill="#4f80ff"/>
<rect x="654.8" y="393.6" width="2.8" height="2.8" fill="#4f80ff"/>
<rect x="676.9" y="384.8" width="2.8" height="2.8" fill="#4f80ff"/>
<rect x="695.8" y="389.7" width="2.8" height="2.8" fill="#4f80ff"/>
<circle cx="572.8" cy="339.1" r="2.3" fill="#fff" stroke="#4f80ff" stroke-width="0.8"/><circle cx="572.8" cy="339.1" r="0.9" fill="#4f80ff"/>
<circle cx="584.3" cy="342.3" r="2.3" fill="#fff" stroke="#4f80ff" stroke-width="0.8"/><circle cx="584.3" cy="342.3" r="0.9" fill="#4f80ff"/>
<circle cx="572.8" cy="368.5" r="2.3" fill="#fff" stroke="#4f80ff" stroke-width="0.8"/><circle cx="572.8" cy="368.5" r="0.9" fill="#4f80ff"/>
<circle cx="616.2" cy="353.8" r="2.3" fill="#fff" stroke="#4f80ff" stroke-width="0.8"/><circle cx="616.2" cy="353.8" r="0.9" fill="#4f80ff"/>
<circle cx="634.4" cy="347.7" r="2.3" fill="#fff" stroke="#4f80ff" stroke-width="0.8"/><circle cx="634.4" cy="347.7" r="0.9" fill="#4f80ff"/>
<circle cx="677.1" cy="353.8" r="2.3" fill="#fff" stroke="#4f80ff" stroke-width="0.8"/><circle cx="677.1" cy="353.8" r="0.9" fill="#4f80ff"/>
<circle cx="686.9" cy="383.7" r="2.3" fill="#fff" stroke="#4f80ff" stroke-width="0.8"/><circle cx="686.9" cy="383.7" r="0.9" fill="#4f80ff"/>
<circle cx="608.3" cy="430.4" r="2.3" fill="#fff" stroke="#4f80ff" stroke-width="0.8"/><circle cx="608.3" cy="430.4" r="0.9" fill="#4f80ff"/>
</g></svg>
<svg style="left:0;top:0" width="1024" height="652" viewBox="0 0 1024 652" shape-rendering="crispEdges">
<rect x="138.5" y="293.75" width="810.5" height="1.8" fill="#e8286c" shape-rendering="auto"/>
<rect x="112" y="305.85" width="767.5" height="1.8" fill="#e8286c" shape-rendering="auto"/>
<rect x="130" y="319.85" width="750.0" height="1.8" fill="#e8286c" shape-rendering="auto"/>
<rect x="162" y="328.95" width="823.0" height="1.8" fill="#e8286c" shape-rendering="auto"/>
<rect x="123" y="376.45" width="846.0" height="1.8" fill="#e8286c" shape-rendering="auto"/>
<rect x="59" y="423.05" width="836.7" height="1.8" fill="#e8286c" shape-rendering="auto"/>
<rect x="148.5" y="432.95" width="750.5" height="1.8" fill="#e8286c" shape-rendering="auto"/>
<rect x="478.6" y="76" width="1.8" height="566" fill="#e8286c" shape-rendering="auto"/>
</svg>
<div class="abs" style="left:0;top:53px;width:58px;height:599px;background:#535353"></div>
<div class="abs" style="left:0;top:53px;width:58px;height:9px;background:#454545"></div>
<div class="abs" style="left:57px;top:53px;width:2px;height:599px;background:#464646"></div>
<div class="abs" style="left:0;top:53px;width:1px;height:599px;background:#484848"></div>
<svg style="left:6px;top:55.5px" width="5" height="4" viewBox="0 0 5 4"><path d="M1.8 0.2 L0.3 2 L1.8 3.8 Z M4.3 0.2 L2.8 2 L4.3 3.8 Z" fill="#cfcfcf"/></svg>
<div class="abs" style="left:21px;top:65px;width:16px;height:3px;background:repeating-linear-gradient(90deg,#444 0,#444 2px,transparent 2px,transparent 3px)"></div>
<div class="abs" style="left:30px;top:79px;width:22px;height:18px;background:#2e2e2e;border-radius:2px"></div>
<svg style="left:9.5px;top:80.0px" width="16" height="16" viewBox="0 0 16 16"><path d="M3.6 1.4 L13.2 10.3 L7.8 10.9 L3.9 14.6 Z" stroke="#d6d6d6" fill="none" stroke-width="1.1" stroke-linejoin="miter"/></svg>
<svg style="left:33.0px;top:80.0px" width="16" height="16" viewBox="0 0 16 16"><path d="M3.6 1.2 L14.3 10.6 L8.4 11.2 L3.8 15.8 Z" fill="#d9d9d9"/></svg>
<svg style="left:48.6px;top:94px" width="3" height="3" viewBox="0 0 3 3"><path d="M3 0 V3 H0 Z" fill="#d6d6d6"/></svg>
<svg style="left:9.5px;top:99.5px" width="16" height="16" viewBox="0 0 16 16"><path d="M2 14 L10.5 5.5" stroke="#d6d6d6" stroke-width="1.8" stroke-linecap="round"/><path d="M12 1 V4 M10.5 2.5 H13.5 M14 6 V8 M13 7 H15 M7 1.5 V3.5 M6 2.5 H8" stroke="#d6d6d6" stroke-width="0.9"/></svg>
<svg style="left:33.0px;top:99.5px" width="16" height="16" viewBox="0 0 16 16"><path d="M9 10.5 C4 11 1.5 8.5 2 6 C2.5 3 6 1.8 9.5 2.2 C13 2.6 14.8 4.8 13.5 7" stroke="#d6d6d6" fill="none" stroke-width="1.2" stroke-linejoin="round" stroke-linecap="round"/><path d="M5.5 8.5 C4.5 9.5 5 11.5 6.5 11 C7 12 6.5 13.5 5.5 14" stroke="#d6d6d6" fill="none" stroke-width="1"/><path d="M9 5.5 L9 14 L11.2 12 L12.5 15 L13.8 14.4 L12.6 11.5 L15.3 11.3 Z" fill="#d6d6d6"/></svg>
<svg style="left:9.5px;top:118.5px" width="16" height="16" viewBox="0 0 16 16"><g transform="translate(-1.2,-0.6) scale(1.12)"><path d="M2 14 L3.2 9 L8.5 3.5 L12.5 7.5 L7 12.8 Z M9.5 2.5 L11 1 L15 5 L13.5 6.5 Z" fill="#d6d6d6"/><path d="M2 14 L6.8 9.2" stroke="#535353" stroke-width="0.9"/><circle cx="7.3" cy="8.7" r="1" fill="#535353"/><path d="M8.6 3.2 L12.8 7.4" stroke="#535353" stroke-width="0.8"/></g></svg>
<svg style="left:23.8px;top:132px" width="3" height="3" viewBox="0 0 3 3"><path d="M3 0 V3 H0 Z" fill="#d6d6d6"/></svg>
<svg style="left:33.0px;top:118.0px" width="16" height="16" viewBox="0 0 16 16"><g transform="translate(3.5,0) scale(.8) "><path d="M2 14 L3.2 9 L8.5 3.5 L12.5 7.5 L7 12.8 Z M9.5 2.5 L11 1 L15 5 L13.5 6.5 Z" fill="#d6d6d6"/><circle cx="7.3" cy="8.7" r="1" fill="#535353"/></g><path d="M2.5 3 C0.5 7 4.5 8 3 11 C2 13 1 13.5 1.5 14.5 C2.2 15.5 4 14.5 5 13" stroke="#d6d6d6" fill="none" stroke-width="1.2" stroke-linejoin="round" stroke-linecap="round"/></svg>
<div class="abs" style="left:10.5px;top:136.5px;width:14px;height:16px;line-height:16px;text-align:center;font-family:'Liberation Serif',serif;font-weight:bold;font-size:17.5px;color:#d6d6d6">T</div>
<svg style="left:23.8px;top:151.5px" width="3" height="3" viewBox="0 0 3 3"><path d="M3 0 V3 H0 Z" fill="#d6d6d6"/></svg>
<svg style="left:33.0px;top:137.5px" width="16" height="16" viewBox="0 0 16 16"><path d="M2.5 13.5 L13.5 2.5" stroke="#d6d6d6" stroke-width="1.3" stroke-linecap="round"/></svg>
<svg style="left:48.6px;top:151.5px" width="3" height="3" viewBox="0 0 3 3"><path d="M3 0 V3 H0 Z" fill="#d6d6d6"/></svg>
<svg style="left:9.5px;top:157.0px" width="16" height="16" viewBox="0 0 16 16"><rect x="1.8" y="2.4" width="12.2" height="11" fill="#6c6c6c" stroke="#cfcfcf" stroke-width="1.1"/></svg>
<svg style="left:23.8px;top:171px" width="3" height="3" viewBox="0 0 3 3"><path d="M3 0 V3 H0 Z" fill="#d6d6d6"/></svg>
<svg style="left:33.0px;top:157.0px" width="16" height="16" viewBox="0 0 16 16"><path d="M14.5 1.2 C12 3 8.5 6.5 7 9 L8.8 10.6 C11 8.5 13.8 4.5 14.5 1.2 Z" fill="#d6d6d6"/><path d="M6.3 9.8 C4.5 9.5 3.5 11 3.3 12.3 C3.1 13.3 2.3 13.8 1.5 14 C3.5 15 7 14.6 8 11.4 Z" fill="#d6d6d6"/></svg>
<svg style="left:48.6px;top:171px" width="3" height="3" viewBox="0 0 3 3"><path d="M3 0 V3 H0 Z" fill="#d6d6d6"/></svg>
<svg style="left:9.5px;top:176.0px" width="16" height="16" viewBox="0 0 16 16"><circle cx="5.6" cy="7.2" r="4.9" fill="#6c6c6c" stroke="#d6d6d6" stroke-width="1.1"/><path d="M6.5 13.5 L14.5 4.5" stroke="#535353" stroke-width="4.4" stroke-linecap="butt"/><path d="M7.2 12.8 L14.6 4.4" stroke="#d6d6d6" stroke-width="2.5" stroke-linecap="round"/><path d="M5.2 15 L6.2 12.2 L8.2 14 Z" fill="#d6d6d6"/></svg>
<svg style="left:23.8px;top:190px" width="3" height="3" viewBox="0 0 3 3"><path d="M3 0 V3 H0 Z" fill="#d6d6d6"/></svg>
<svg style="left:33.0px;top:176.0px" width="16" height="16" viewBox="0 0 16 16"><g transform="translate(-0.9,-0.9) scale(1.1)"><path d="M2 9.5 L9.5 2 L14.5 7 L7 14.5 Z" fill="#d6d6d6"/><path d="M4.2 7.8 L9 12.6" stroke="#535353" stroke-width="1"/><path d="M2.8 9.6 L6.8 13.6 L6 14.2 L2.2 10.4 Z" fill="#535353"/></g></svg>
<svg style="left:48.6px;top:190px" width="3" height="3" viewBox="0 0 3 3"><path d="M3 0 V3 H0 Z" fill="#d6d6d6"/></svg>
<svg style="left:9.5px;top:195.0px" width="16" height="16" viewBox="0 0 16 16"><path d="M3.2 5.5 A6 6 0 0 1 13.8 8" stroke="#d6d6d6" fill="none" stroke-width="1.2" stroke-linejoin="round" stroke-linecap="round"/><path d="M13.8 8 A6 6 0 1 1 3 6" stroke="#d6d6d6" fill="none" stroke-width="1" stroke-dasharray="1.3 1.3"/><path d="M2 1.8 L2.2 6.8 L7 6 Z" fill="#d6d6d6"/></svg>
<svg style="left:23.8px;top:209px" width="3" height="3" viewBox="0 0 3 3"><path d="M3 0 V3 H0 Z" fill="#d6d6d6"/></svg>
<svg style="left:33.0px;top:195.0px" width="16" height="16" viewBox="0 0 16 16"><rect x="1.5" y="7.5" width="7" height="7" stroke="#d6d6d6" fill="none" stroke-width="1.2" stroke-linejoin="round" stroke-linecap="round"/><rect x="5" y="1.5" width="9.5" height="9.5" stroke="#d6d6d6" fill="none" stroke-width="1.2" stroke-linejoin="round" stroke-linecap="round"/><path d="M8 8 L12.5 3.5 M9.5 3.5 H12.5 V6.5" stroke="#d6d6d6" fill="none" stroke-width="1.2" stroke-linejoin="round" stroke-linecap="round"/></svg>
<svg style="left:48.6px;top:209px" width="3" height="3" viewBox="0 0 3 3"><path d="M3 0 V3 H0 Z" fill="#d6d6d6"/></svg>
<svg style="left:9.5px;top:214.5px" width="16" height="16" viewBox="0 0 16 16"><path d="M1.5 12.5 C4 13.5 6 11 7.5 8.5 C9 6 11.5 5.5 14.5 7.5" stroke="#d6d6d6" fill="none" stroke-width="2.3" stroke-linecap="round"/><path d="M3.5 3 C5 2 7 3 6.5 5 M9 11 C10.5 13.5 13 13 14 11" stroke="#d6d6d6" fill="none" stroke-width="1.2" stroke-linejoin="round" stroke-linecap="round"/><circle cx="4.5" cy="4.2" r="1.6" fill="#d6d6d6"/></svg>
<svg style="left:23.8px;top:228.5px" width="3" height="3" viewBox="0 0 3 3"><path d="M3 0 V3 H0 Z" fill="#d6d6d6"/></svg>
<svg style="left:33.0px;top:214.5px" width="16" height="16" viewBox="0 0 16 16"><rect x="4.5" y="3" width="10" height="10" stroke="#d6d6d6" fill="none" stroke-width="1" stroke-dasharray="2 1.4"/><rect x="3.3" y="1.8" width="2.4" height="2.4" fill="#d6d6d6"/><rect x="13.3" y="1.8" width="2.4" height="2.4" fill="#d6d6d6"/><rect x="13.3" y="11.8" width="2.4" height="2.4" fill="#d6d6d6"/><path d="M1 1.5 L1 12 L3.8 9.6 L5.5 13.4 L7.2 12.6 L5.6 9 L9 8.6 Z" fill="#d6d6d6"/></svg>
<svg style="left:48.6px;top:228.5px" width="3" height="3" viewBox="0 0 3 3"><path d="M3 0 V3 H0 Z" fill="#d6d6d6"/></svg>
<svg style="left:9.5px;top:234.0px" width="16" height="16" viewBox="0 0 16 16"><ellipse cx="6.5" cy="6" rx="5.5" ry="4.2" stroke="#d6d6d6" fill="none" stroke-width="1.2" stroke-linejoin="round" stroke-linecap="round"/><path d="M4 2.3 V9.7 M1.2 6 H9" stroke="#d6d6d6" stroke-width="0.9"/><path d="M8 6.5 L8 15 L10.3 13 L11.6 15.8 L13 15.2 L11.8 12.4 L14.8 12.2 Z" fill="#d6d6d6"/></svg>
<svg style="left:23.8px;top:248px" width="3" height="3" viewBox="0 0 3 3"><path d="M3 0 V3 H0 Z" fill="#d6d6d6"/></svg>
<svg style="left:33.0px;top:234.0px" width="16" height="16" viewBox="0 0 16 16"><path d="M1.2 1.2 L8.6 3.6 V10.6 L1.2 14.6 Z M5 2.5 V12.6 M1.2 5.6 L8.6 6.2 M1.2 10 L8.6 8.6" stroke="#d6d6d6" fill="none" stroke-width="1.05" stroke-linejoin="round"/><path d="M9.4 7.6 H11" stroke="#6e6e6e" stroke-width="0.9"/><path d="M9.4 9.2 H12.4" stroke="#7c7c7c" stroke-width="0.9"/><path d="M8.6 10.9 H13.8" stroke="#8e8e8e" stroke-width="0.9"/><path d="M5.6 12.7 H15" stroke="#a4a4a4" stroke-width="0.9"/><path d="M1.6 14.6 H16" stroke="#c4c4c4" stroke-width="1"/></svg>
<svg style="left:48.6px;top:248px" width="3" height="3" viewBox="0 0 3 3"><path d="M3 0 V3 H0 Z" fill="#d6d6d6"/></svg>
<svg style="left:9.5px;top:253.0px" width="16" height="16" viewBox="0 0 16 16"><rect x="1.5" y="2" width="13" height="12" stroke="#d6d6d6" fill="none" stroke-width="1.2" stroke-linejoin="round" stroke-linecap="round"/><path d="M1.5 6 C5 4.5 9 8 14.5 5.5 M1.5 10.5 C6 9 9 12.5 14.5 10 M5.5 2 C7 6 4.5 9 6.5 14 M10.5 2 C12 6 9 9 11 14" stroke="#d6d6d6" fill="none" stroke-width="0.9"/></svg>
<div class="abs" style="left:34.5px;top:255px;width:13px;height:12px;border:1px solid #d6d6d6;background:linear-gradient(90deg,#2c2c2c,#e6e6e6)"></div>
<svg style="left:9.5px;top:272.5px" width="16" height="16" viewBox="0 0 16 16"><path d="M3 13 L13 3" stroke="#d6d6d6" stroke-width="2.2"/><path d="M1 11 L5 15 M11 1 L15 5" stroke="#d6d6d6" stroke-width="1.2"/><path d="M5.5 8 L8 10.5 M7.5 6 L10 8.5" stroke="#535353" stroke-width="0.8"/></svg>
<svg style="left:33.0px;top:272.5px" width="16" height="16" viewBox="0 0 16 16"><path d="M2 14 L2.6 11.4 L9 5 L11 7 L4.6 13.4 Z" stroke="#d6d6d6" fill="none" stroke-width="1.2" stroke-linejoin="round" stroke-linecap="round"/><path d="M8.3 3.8 L12.2 7.7 L13.2 6.7 L12.2 5.7 L14 3.6 C14.8 2.6 13.3 1.2 12.4 2 L10.3 3.8 L9.3 2.8 Z" fill="#d6d6d6"/></svg>
<svg style="left:48.6px;top:286.5px" width="3" height="3" viewBox="0 0 3 3"><path d="M3 0 V3 H0 Z" fill="#d6d6d6"/></svg>
<svg style="left:9.5px;top:292.0px" width="16" height="16" viewBox="0 0 16 16"><rect x="1" y="1.5" width="6.5" height="6.5" fill="#d6d6d6"/><circle cx="8.5" cy="8.5" r="3.7" fill="#8f8f8f" stroke="#d6d6d6" stroke-width="1"/><circle cx="11.5" cy="11.5" r="3.2" fill="#535353" stroke="#d6d6d6" stroke-width="1.1"/></svg>
<svg style="left:33.0px;top:292.0px" width="16" height="16" viewBox="0 0 16 16"><rect x="6.5" y="4.5" width="7.5" height="10" rx="1.3" stroke="#d6d6d6" fill="none" stroke-width="1.2" stroke-linejoin="round" stroke-linecap="round"/><rect x="8.5" y="1.5" width="3.5" height="3" fill="#d6d6d6"/><circle cx="10.2" cy="9.5" r="2" stroke="#d6d6d6" fill="none" stroke-width="1.2" stroke-linejoin="round" stroke-linecap="round"/><circle cx="10.2" cy="9.5" r="0.7" fill="#d6d6d6"/><path d="M1 2 h1 M3 2 h1 M5 2 h1 M1 4 h1 M3 4 h1 M1 6 h1 M3.2 6 h1" stroke="#d6d6d6" stroke-width="1"/></svg>
<svg style="left:48.6px;top:306px" width="3" height="3" viewBox="0 0 3 3"><path d="M3 0 V3 H0 Z" fill="#d6d6d6"/></svg>
<svg style="left:9.5px;top:311.0px" width="16" height="16" viewBox="0 0 16 16"><path d="M1.5 1 V14.5 H15" stroke="#d6d6d6" fill="none" stroke-width="1.2" stroke-linejoin="round" stroke-linecap="round"/><rect x="3.5" y="7" width="2.2" height="7" fill="#d6d6d6"/><rect x="7" y="3" width="2.2" height="11" fill="#d6d6d6"/><rect x="10.5" y="5.5" width="2.2" height="8.5" fill="#d6d6d6"/></svg>
<svg style="left:23.8px;top:325px" width="3" height="3" viewBox="0 0 3 3"><path d="M3 0 V3 H0 Z" fill="#d6d6d6"/></svg>
<svg style="left:33.0px;top:311.0px" width="16" height="16" viewBox="0 0 16 16"><path d="M4 0.5 V4 M0.5 4 H4" stroke="#d6d6d6" fill="none" stroke-width="1.2" stroke-linejoin="round" stroke-linecap="round"/><path d="M4.5 4.5 H10.5 L14 8 V14.5 H4.5 Z" fill="#7c7c7c" stroke="#d6d6d6" stroke-width="1.1" stroke-linejoin="round"/><path d="M10.5 4.5 V8 H14" stroke="#d6d6d6" fill="none" stroke-width="1.2" stroke-linejoin="round" stroke-linecap="round"/></svg>
<svg style="left:9.5px;top:330.0px" width="16" height="16" viewBox="0 0 16 16"><path d="M1.5 14.5 L9.5 4.5 L12 7 L4 13 Z" stroke="#d6d6d6" fill="none" stroke-width="1.2" stroke-linejoin="round" stroke-linecap="round"/><path d="M9.5 4.5 L12.3 1.2 L15 4 L12 7 Z" fill="#d6d6d6"/></svg>
<svg style="left:23.8px;top:344px" width="3" height="3" viewBox="0 0 3 3"><path d="M3 0 V3 H0 Z" fill="#d6d6d6"/></svg>
<svg style="left:34.0px;top:330.0px" width="14" height="16" viewBox="0 0 14 16"><path d="M4.2 9.5 L2.2 6.6 C1.6 5.6 2.8 4.8 3.6 5.6 L5 7.2 V2.6 C5 1.6 6.5 1.6 6.6 2.6 V1.8 C6.7 0.7 8.3 0.7 8.4 1.8 V2.4 C8.5 1.4 10 1.4 10.1 2.4 V3.6 C10.3 2.8 11.7 2.8 11.7 3.8 L11.9 9 C12 12 10.6 14.5 8 14.5 C6 14.5 5 12 4.2 9.5 Z" fill="#d6d6d6"/><path d="M6.7 3 V7 M8.4 3 V7 M10.1 3.5 V7" stroke="#535353" stroke-width="0.5"/></svg>
<svg style="left:48.6px;top:344px" width="3" height="3" viewBox="0 0 3 3"><path d="M3 0 V3 H0 Z" fill="#d6d6d6"/></svg>
<svg style="left:9.5px;top:349.0px" width="16" height="16" viewBox="0 0 16 16"><circle cx="6.3" cy="6.3" r="4.4" stroke="#d6d6d6" fill="none" stroke-width="1.2" stroke-linejoin="round" stroke-linecap="round"/><path d="M9.6 9.6 L14.3 14.3" stroke="#d6d6d6" stroke-width="1.9" stroke-linecap="round"/></svg>
<div class="abs" style="left:5px;top:369px;width:48px;height:1px;background:#484848"></div>
<div class="abs" style="left:6px;top:373px;width:28px;height:28px;background:#0c0e0e;border:1px solid #c8c8c8;border-radius:1px;box-shadow:0 0 0 .5px #333"></div>
<svg style="left:19.5px;top:388px" width="28" height="28" viewBox="0 0 28 28"><rect x="0" y="0" width="28" height="28" fill="#fff"/><rect x="7.5" y="7.5" width="13" height="13" fill="#606060" stroke="#2a2a2a" stroke-width="1"/><path d="M0.7 27.3 L27.3 0.7" stroke="#f01010" stroke-width="1.9"/></svg>
<svg style="left:40px;top:374px" width="11" height="11" viewBox="0 0 11 11"><path d="M2 3.5 C5 1 8 3 8.5 7.5" stroke="#d6d6d6" fill="none" stroke-width="1.4"/><path d="M0.5 3 L4 1 L3.8 5.2 Z M6.3 6.6 L10.6 7 L8.4 10.6 Z" fill="#d6d6d6"/></svg>
<svg style="left:5px;top:407px" width="11" height="11" viewBox="0 0 11 11"><rect x="3.5" y="3.5" width="6.5" height="6.5" fill="#fff" stroke="#111" stroke-width="1.4"/><rect x="0.7" y="0.7" width="6" height="6" fill="#fff" stroke="#111" stroke-width="1"/></svg>
<div class="abs" style="left:37px;top:422px;width:15px;height:15px;background:#3a3a3a;border-radius:1px"></div>
<div class="abs" style="left:7px;top:424px;width:11px;height:11px;background:#6a6a6a;border:1.5px solid #111;box-shadow:0 0 0 .6px #9a9a9a"></div>
<div class="abs" style="left:23px;top:424px;width:11px;height:11px;background:linear-gradient(90deg,#f4f4f4,#555);border:1.2px solid #111"></div>
<svg style="left:39px;top:424px" width="11" height="11" viewBox="0 0 11 11"><rect x="0.6" y="0.6" width="9.8" height="9.8" fill="#fff" stroke="#111" stroke-width="1.2"/><path d="M1 10 L10 1" stroke="#f01010" stroke-width="2"/></svg>
<div class="abs" style="left:5px;top:441px;width:47px;height:16px;border:1px solid #5e5e5e"></div>
<div class="abs" style="left:6px;top:442px;width:14px;height:14px;background:#3c3c3c"></div>
<div class="abs" style="left:20px;top:442px;width:1px;height:14px;background:#5e5e5e"></div><div class="abs" style="left:36px;top:442px;width:1px;height:14px;background:#5e5e5e"></div>
<svg style="left:8px;top:444px" width="11" height="11" viewBox="0 0 11 11"><circle cx="4.5" cy="4.5" r="3.6" fill="#8a8a8a" stroke="#d6d6d6" stroke-width="1"/><rect x="4.5" y="4.5" width="5.5" height="5.5" fill="#d6d6d6"/></svg>
<svg style="left:24px;top:444px" width="11" height="11" viewBox="0 0 11 11"><rect x="4.5" y="4.5" width="5.5" height="5.5" fill="#8a8a8a"/><circle cx="4.5" cy="4.5" r="3.6" fill="#8a8a8a" stroke="#d6d6d6" stroke-width="1"/></svg>
<svg style="left:40px;top:445px" width="9" height="9" viewBox="0 0 9 9"><circle cx="4.5" cy="4.5" r="3.6" fill="#777" stroke="#b0b0b0" stroke-width="1"/><path d="M4.5 4.5 H8 A3.5 3.5 0 0 0 4.5 1 Z" fill="#b0b0b0"/></svg>
<svg style="left:20px;top:463px" width="19" height="15" viewBox="0 0 19 15"><rect x="7" y="0.6" width="11" height="8.5" fill="#6a6a6a" stroke="#d6d6d6" stroke-width="1.1"/><rect x="0.6" y="4.5" width="10" height="9" fill="#6a6a6a" stroke="#d6d6d6" stroke-width="1.1"/><path d="M7 2.2 H18 M0.6 6 H10.6" stroke="#d6d6d6" stroke-width="1"/></svg>
<svg style="left:23px;top:494px" width="13" height="4" viewBox="0 0 13 4"><circle cx="2" cy="2" r="1.2" fill="#d6d6d6"/><circle cx="6.3" cy="2" r="1.2" fill="#d6d6d6"/><circle cx="10.6" cy="2" r="1.2" fill="#d6d6d6"/></svg>
<div class="abs" style="left:1px;top:506px;width:56px;height:1px;background:#484848"></div>
<div class="abs" style="left:985px;top:76px;width:13px;height:566px;background:#4a4a4a"></div>
<div class="abs" style="left:986px;top:347px;width:11px;height:21px;background:#656565;border-radius:5px"></div>
<svg style="left:988px;top:633.5px" width="8" height="5" viewBox="0 0 8 5"><path d="M1 0.8 L4 3.8 L7 0.8" fill="none" stroke="#b4b4b4" stroke-width="1.2"/></svg>
<div class="abs" style="left:999px;top:53px;width:25px;height:599px;background:#535353"></div>
<div class="abs" style="left:998px;top:53px;width:2px;height:599px;background:#444"></div>
<div class="abs" style="left:1000px;top:53px;width:24px;height:9px;background:#4b4b4b"></div>
<svg style="left:1016px;top:55px" width="6" height="5" viewBox="0 0 6 5"><path d="M3.5 0.5 L1.5 2.5 L3.5 4.5" fill="#d0d0d0"/></svg>
<div class="abs" style="left:1006px;top:65px;width:18px;height:3px;background:repeating-linear-gradient(90deg,#444 0,#444 2px,transparent 2px,transparent 3px)"></div>
<div class="abs" style="left:1005px;top:72px;width:19px;height:18px;background:#3c3c3c;border-radius:2px"></div>
<svg style="left:1008px;top:74.5px" width="17" height="14" viewBox="0 0 17 14"><path d="M8 1.5 C3.5 1.5 0.8 4 0.8 7 C0.8 10 3.5 12 6.3 12 C8 12 7.8 10.3 9 10 C11.5 9.6 16 10.5 16 6.5 C16 3.5 12.5 1.5 8 1.5 Z" fill="#f0f0f0"/><circle cx="3.6" cy="7.6" r="1.15" fill="#3c3c3c"/><circle cx="5.6" cy="10" r="1" fill="#3c3c3c"/><circle cx="9" cy="8.2" r="1" fill="#3c3c3c"/><circle cx="12.5" cy="8" r="1" fill="#3c3c3c"/><path d="M6 6.5 L14 1.5 L15.5 3.5 L8 8 Z" fill="#f0f0f0" stroke="#3c3c3c" stroke-width="0.6"/></svg>
<svg style="left:1009.5px;top:96.5px" width="14" height="14" viewBox="0 0 14 14"><path d="M1 1 C7.5 1 12.5 6 12.5 12.5 H1 Z" fill="url(#cgq)" stroke="#d6d6d6" stroke-width="1.1"/><defs><linearGradient id="cgq" x1="0" y1="0" x2="1" y2="1"><stop offset="0" stop-color="#2a2a2a"/><stop offset="1" stop-color="#f2f2f2"/></linearGradient></defs></svg>
<div class="abs" style="left:1000px;top:118px;width:24px;height:1px;background:#454545"></div>
<div class="abs" style="left:1006px;top:122px;width:18px;height:3px;background:repeating-linear-gradient(90deg,#444 0,#444 2px,transparent 2px,transparent 3px)"></div>
<svg style="left:1007px;top:131px" width="16" height="13" viewBox="0 0 16 13"><rect x="0.5" y="0.5" width="15" height="12" fill="#8a8a8a" stroke="#d6d6d6" stroke-width="1"/><rect x="1" y="1" width="4.5" height="5" fill="#e6e6e6"/><rect x="6.5" y="1" width="4" height="5" fill="#bdbdbd"/><path d="M0.5 6.5 H15.5 M5.8 0.5 V12.5 M10.8 0.5 V12.5" stroke="#d6d6d6" stroke-width="0.9"/></svg>
<svg style="left:1008px;top:151px" width="14" height="17" viewBox="0 0 14 17"><path d="M4 16 H10 L11 10 H3 Z" fill="#d6d6d6"/><path d="M4.5 10 L3 3 M7 10 V1 M9.5 10 L11.5 3" stroke="#d6d6d6" stroke-width="1.5"/><path d="M1.5 2.5 L3 0.5 L4.5 3 Z M5.7 1.5 L7 0 L8.3 1.5 Z M10 3 L12 0.5 L13 3.5 Z" fill="#d6d6d6"/></svg>
<svg style="left:1007px;top:174px" width="16" height="17" viewBox="0 0 16 17"><circle cx="8" cy="4.5" r="3.6" fill="#d6d6d6"/><circle cx="4" cy="9.5" r="3.6" fill="#d6d6d6"/><circle cx="12" cy="9.5" r="3.6" fill="#d6d6d6"/><path d="M8 6 L5.5 16 H10.5 Z" fill="#d6d6d6"/><circle cx="8" cy="4.5" r="2" fill="#6e6e6e"/><circle cx="4" cy="9.5" r="2" fill="#6e6e6e"/><circle cx="12" cy="9.5" r="2" fill="#6e6e6e"/></svg>
<div class="abs" style="left:1000px;top:197px;width:24px;height:1px;background:#454545"></div>
<div class="abs" style="left:1006px;top:201px;width:18px;height:3px;background:repeating-linear-gradient(90deg,#444 0,#444 2px,transparent 2px,transparent 3px)"></div>
<svg style="left:1007px;top:208px" width="16" height="13" viewBox="0 0 16 13"><rect x="0" y="0.5" width="16" height="2.6" fill="#d6d6d6"/><rect x="0" y="5.5" width="16" height="1.8" fill="#d6d6d6"/><rect x="0" y="10" width="16" height="1.2" fill="#d6d6d6"/></svg>
<div class="abs" style="left:1007px;top:231px;width:16px;height:13px;border:1px solid #d6d6d6;background:linear-gradient(90deg,#3a3a3a,#ececec)"></div>
<svg style="left:1007px;top:253px" width="17" height="16" viewBox="0 0 17 16"><circle cx="6.5" cy="6.5" r="5.8" fill="#c8c8c8"/><circle cx="10.5" cy="10" r="5.5" fill="#8a8a8a" fill-opacity=".9" stroke="#a8a8a8" stroke-width="0.6"/></svg>
<div class="abs" style="left:1000px;top:276px;width:24px;height:1px;background:#454545"></div>
<div class="abs" style="left:1006px;top:280px;width:18px;height:3px;background:repeating-linear-gradient(90deg,#444 0,#444 2px,transparent 2px,transparent 3px)"></div>
<svg style="left:1007px;top:285px" width="16" height="16" viewBox="0 0 16 16"><circle cx="8" cy="8" r="7.3" fill="none" stroke="#d6d6d6" stroke-width="0.9" stroke-dasharray="1 1.1"/><circle cx="8" cy="8" r="5.3" fill="#e2e2e2"/></svg>
<svg style="left:1008px;top:309px" width="16" height="15" viewBox="0 0 16 15"><rect x="3.5" y="0.6" width="11" height="10.5" stroke="#d6d6d6" fill="none" stroke-width="1.2" stroke-linejoin="round" stroke-linecap="round"/><rect x="0.8" y="6.8" width="4.6" height="4.6" fill="#535353" stroke="#d6d6d6" stroke-width="1"/><rect x="2.6" y="8.6" width="4.4" height="4.4" fill="#8a8a8a" stroke="#d6d6d6" stroke-width="0.9"/></svg>
<div class="abs" style="left:1000px;top:328px;width:24px;height:1px;background:#454545"></div>
<div class="abs" style="left:806px;top:53px;width:193px;height:9px;background:#474747"></div>
<div class="abs" style="left:807px;top:63px;width:192px;height:80px;background:#535353;box-shadow:0 1px 3px rgba(0,0,0,.45)"></div>
<div class="abs" style="left:807px;top:63px;width:192px;height:22px;background:#424242"></div>
<div class="abs" style="left:807px;top:63px;width:42px;height:22px;background:#535353"></div>
<div class="abs" style="left:907px;top:63px;width:1px;height:22px;background:#3a3a3a"></div>
<div class="abs" style="left:806px;top:62px;width:194px;height:1px;background:#3a3a3a"></div>
<div class="abs" style="left:806px;top:62px;width:1px;height:81px;background:#3f3f3f"></div>
<svg style="left:811px;top:70px" width="5" height="8" viewBox="0 0 5 8"><path d="M2.5 0.6 L4.4 2.8 H0.6 Z M2.5 7.4 L4.4 5.2 H0.6 Z" fill="#c8c8c8"/></svg>
<div class="t" style="left:819.5px;top:68px;font-weight:bold;color:#f2f2f2;transform:scaleX(.8)">Color</div>
<div class="t" style="left:855px;top:68px;color:#c4c4c4;transform:scaleX(.88)">Color Guide</div>
<svg style="left:966px;top:70px" width="9" height="8" viewBox="0 0 9 8"><path d="M0.8 0.8 L4 4 L0.8 7.2 M5 0.8 L8.2 4 L5 7.2" fill="none" stroke="#dcdcdc" stroke-width="1.1"/></svg>
<div class="abs" style="left:979px;top:69px;width:1px;height:10px;background:#8a8a8a"></div>
<svg style="left:985px;top:70px" width="9" height="8" viewBox="0 0 9 8"><path d="M0 1 H9 M0 4 H9 M0 7 H9" stroke="#c8c8c8" stroke-width="1"/></svg>
<svg style="left:812px;top:92px" width="32" height="11" viewBox="0 0 32 11"><rect x="0" y="0" width="10.5" height="10.5" fill="#fff"/><path d="M0.5 10 L10 0.5" stroke="#f01010" stroke-width="1.6"/><rect x="10.5" y="0" width="10.5" height="10.5" fill="#080a0a"/><rect x="21" y="0" width="10.5" height="10.5" fill="#fff"/></svg>
<div class="t ul" style="left:928px;top:92px;transform:none;color:#e0e0e0">#</div>
<div class="fld" style="left:938px;top:90.5px;width:47px;height:15px;background:#484848;border:1px solid #5c5c5c"></div>
<div class="t" style="left:942px;top:92.5px;transform:scaleX(.9);color:#e8e8e8">231F20</div>
<div class="abs" style="left:812px;top:112px;width:173px;height:19px;border:1px solid #2e2e2e;background:linear-gradient(180deg,rgba(255,255,255,1) 0%,rgba(255,255,255,.55) 22%,rgba(255,255,255,0) 50%,rgba(0,0,0,0) 52%,rgba(0,0,0,.5) 78%,rgba(0,0,0,1) 100%),linear-gradient(90deg,#ff0018 0%,#ff9a00 9%,#f2f200 17%,#50d000 30%,#00b050 42%,#00b0e8 53%,#2030c0 65%,#9020b0 78%,#f01890 90%,#f00020 100%)"></div>
<div class="abs" style="left:807px;top:137px;width:192px;height:6px;background:#4b4b4b;border-top:1px solid #3e3e3e"></div>
<div class="abs" style="left:895px;top:139px;width:16px;height:3px;background:repeating-linear-gradient(90deg,#3a3a3a 0,#3a3a3a 2px,transparent 2px,transparent 3px)"></div>
<div class="abs" style="left:59px;top:642px;width:940px;height:10px;background:#535353"></div>
<div class="abs" style="left:63px;top:644px;width:39px;height:10px;background:#454545"></div>
<div class="t" style="left:65px;top:645px;color:#d8d8d8">100%</div>
<div class="abs" style="left:104px;top:644px;width:13px;height:10px;background:#464646"></div>
<svg style="left:107px;top:647.5px" width="7" height="5" viewBox="0 0 7 5"><path d="M0.6 0.6 L3.5 3.6 L6.4 0.6" fill="none" stroke="#e0e0e0" stroke-width="1.3"/></svg>
<div class="abs" style="left:121px;top:644px;width:40px;height:10px;background:#454545"></div>
<div class="t" style="left:123.5px;top:645px;color:#d8d8d8">0°</div>
<div class="abs" style="left:162px;top:644px;width:13px;height:10px;background:#464646"></div>
<svg style="left:165px;top:647.5px" width="7" height="5" viewBox="0 0 7 5"><path d="M0.6 0.6 L3.5 3.6 L6.4 0.6" fill="none" stroke="#e0e0e0" stroke-width="1.3"/></svg>
<div class="abs" style="left:177px;top:644px;width:31px;height:10px;background:#4c4c4c"></div>
<svg style="left:183px;top:647px" width="22" height="6" viewBox="0 0 22 6"><path d="M0.5 0 V6 M5 0 V6 L1.5 3 Z M17 0.5 V6 L13.5 3 Z" fill="#6c6c6c" stroke="#6c6c6c" stroke-width="0.8"/></svg>
<div class="abs" style="left:209px;top:644px;width:32px;height:10px;background:#454545"></div>
<div class="t" style="left:212px;top:645px;color:#d8d8d8">1</div>
<div class="abs" style="left:243px;top:644px;width:13px;height:10px;background:#464646"></div>
<svg style="left:246px;top:647.5px" width="7" height="5" viewBox="0 0 7 5"><path d="M0.6 0.6 L3.5 3.6 L6.4 0.6" fill="none" stroke="#e0e0e0" stroke-width="1.3"/></svg>
<svg style="left:263px;top:647px" width="22" height="6" viewBox="0 0 22 6"><path d="M1 0.5 V6 L4.5 3 Z M13 0 V6 L16.5 3 Z M17.5 0 V6" fill="#6c6c6c" stroke="#6c6c6c" stroke-width="0.8"/></svg>
<div class="t" style="left:343px;top:645px;color:#d8d8d8">Direct Selection</div>
<svg style="left:456px;top:646px" width="5" height="7" viewBox="0 0 5 7"><path d="M0.5 0.5 V6.5 L4.5 3.5 Z" fill="#e0e0e0"/></svg>
<svg style="left:468px;top:645px" width="5" height="7" viewBox="0 0 5 7"><path d="M4 0.6 L1 3.5 L4 6.4" fill="none" stroke="#c8c8c8" stroke-width="1.1"/></svg>
<div class="abs" style="left:465px;top:643px;width:521px;height:9px;background:#4a4a4a"></div>
<svg style="left:468px;top:645px" width="5" height="7" viewBox="0 0 5 7"><path d="M4 0.6 L1 3.5 L4 6.4" fill="none" stroke="#c8c8c8" stroke-width="1.1"/></svg>
<div class="abs" style="left:716px;top:644px;width:19px;height:11px;background:#6a6a6a;border-radius:5px"></div>
<svg style="left:976px;top:645px" width="5" height="7" viewBox="0 0 5 7"><path d="M1 0.6 L4 3.5 L1 6.4" fill="none" stroke="#b4b4b4" stroke-width="1.1"/></svg>
<div class="abs" style="left:986px;top:642px;width:13px;height:10px;background:#535353"></div>
</body></html>
